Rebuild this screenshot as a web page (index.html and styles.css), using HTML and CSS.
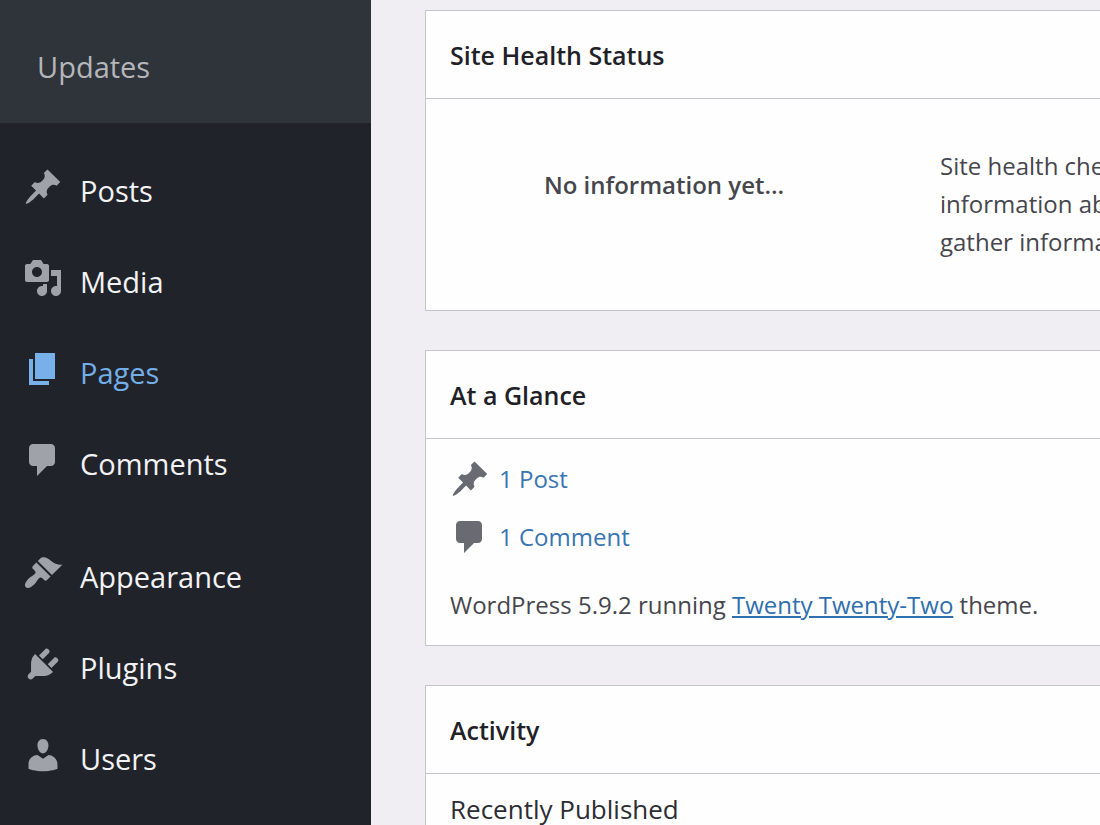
FILE: index.html
```html
<!DOCTYPE html>
<html lang="en">
<head>
<meta charset="utf-8">
<title>Dashboard</title>
<link rel="stylesheet" href="styles.css">
</head>
<body>
<div class="admin">
  <nav class="sidebar" aria-label="Main menu">
    <div class="submenu"><a href="#updates">Updates</a></div>
    <ul class="menu">
      <li><a class="menu-item" href="#posts">
        <svg class="icon" viewBox="0 0 20 20" aria-hidden="true"><path d="M10.44 3.02l1.82-1.82 6.36 6.35-1.83 1.82c-1.05-.68-2.48-.57-3.41.36l-.75.75c-.92.93-1.04 2.35-.35 3.41l-1.83 1.82-2.41-2.41-2.8 2.79c-.42.42-3.38 2.71-3.8 2.29s1.86-3.39 2.28-3.81l2.79-2.79L4.1 9.36l1.83-1.82c1.05.69 2.48.57 3.4-.36l.75-.75c.93-.92 1.05-2.35.36-3.41z"/></svg>
        <span>Posts</span></a></li>
      <li><a class="menu-item" href="#media">
        <svg class="icon" viewBox="0 0 20 20" aria-hidden="true"><path d="M13 11V4c0-.55-.45-1-1-1h-1.67L9 1H5L3.67 3H2c-.55 0-1 .45-1 1v7c0 .55.45 1 1 1h10c.55 0 1-.45 1-1zM7 4.5c1.38 0 2.5 1.12 2.5 2.5S8.38 9.5 7 9.5 4.5 8.38 4.5 7 5.62 4.5 7 4.5zM14 6h5v10.5c0 1.38-1.12 2.5-2.5 2.5S14 17.88 14 16.5s1.12-2.5 2.5-2.5c.17 0 .34.02.5.05V9h-3V6zm-4 8.05V13h2v3.5c0 1.38-1.12 2.5-2.5 2.5S7 17.88 7 16.5 8.12 14 9.5 14c.17 0 .34.02.5.05z"/></svg>
        <span>Media</span></a></li>
      <li><a class="menu-item is-active" href="#pages">
        <svg class="icon" viewBox="0 0 20 20" aria-hidden="true"><path d="M6 15V2h10v13H6zm-1 1h8v2H3V5h2v11z"/></svg>
        <span>Pages</span></a></li>
      <li><a class="menu-item" href="#comments">
        <svg class="icon" viewBox="0 0 20 20" aria-hidden="true"><path d="M5 2h9c1.1 0 2 .9 2 2v7c0 1.1-.9 2-2 2h-2l-5 5v-5H5c-1.1 0-2-.9-2-2V4c0-1.1.9-2 2-2z"/></svg>
        <span>Comments</span></a></li>
    </ul>
    <ul class="menu">
      <li><a class="menu-item" href="#appearance">
        <svg class="icon" viewBox="0 0 20 20" aria-hidden="true"><path d="M14.48 11.06L7.41 3.99l1.5-1.5c.5-.56 2.3-.47 3.51.32 1.21.8 1.43 1.28 2.91 2.1 1.18.64 2.45 1.26 4.45.85zm-.71.71L6.7 4.7 4.93 6.47c-.39.39-.39 1.02 0 1.41l1.06 1.06c.39.39.39 1.03 0 1.42-.6.6-1.43 1.11-2.21 1.69-.35.26-.7.53-1.01.84C1.43 14.23.4 16.08 1.4 17.07c.99 1 2.84-.03 4.18-1.36.31-.31.58-.66.85-1.02.57-.78 1.08-1.61 1.69-2.21.39-.39 1.02-.39 1.41 0l1.06 1.06c.39.39 1.02.39 1.41 0z"/></svg>
        <span>Appearance</span></a></li>
      <li><a class="menu-item" href="#plugins">
        <svg class="icon" viewBox="0 0 20 20" aria-hidden="true"><path d="M13.11 4.36L9.87 7.6 8 5.73l3.24-3.24c.35-.34 1.05-.2 1.56.32.52.51.66 1.21.31 1.55zm-8 1.77l.91-1.12 9.01 9.01-1.19.84c-.71.71-2.63 1.16-3.82 1.16H6.14L4.9 17.26c-.59.59-1.54.59-2.12 0-.59-.58-.59-1.53 0-2.12l1.24-1.24v-3.88c0-1.13.4-3.19 1.09-3.89zm7.26 3.97l3.24-3.24c.34-.35 1.04-.21 1.55.31.52.51.66 1.21.31 1.55l-3.24 3.25z"/></svg>
        <span>Plugins</span></a></li>
      <li><a class="menu-item" href="#users">
        <svg class="icon" viewBox="0 0 20 20" aria-hidden="true"><path d="M10 9.25c-2.27 0-2.73-3.44-2.73-3.44C7 4.02 7.82 2 9.97 2c2.16 0 2.98 2.02 2.71 3.81 0 0-.41 3.44-2.68 3.44zm0 2.57L12.72 10c2.39 0 4.52 2.33 4.52 4.53v2.49s-3.65 1.13-7.24 1.13c-3.65 0-7.24-1.13-7.24-1.13v-2.49c0-2.25 1.94-4.48 4.47-4.48z"/></svg>
        <span>Users</span></a></li>
    </ul>
  </nav>
  <main class="content">
    <section class="panel">
      <h2 class="panel-title">Site Health Status</h2>
      <div class="health">
        <p class="health-label">No information yet…</p>
        <p class="health-text">Site health checks<br>information about<br>gather information</p>
      </div>
    </section>
    <section class="panel">
      <h2 class="panel-title">At a Glance</h2>
      <div class="glance">
        <ul class="counts">
          <li><a class="count" href="#posts">
            <svg class="icon" viewBox="0 0 20 20" aria-hidden="true"><path d="M10.44 3.02l1.82-1.82 6.36 6.35-1.83 1.82c-1.05-.68-2.48-.57-3.41.36l-.75.75c-.92.93-1.04 2.35-.35 3.41l-1.83 1.82-2.41-2.41-2.8 2.79c-.42.42-3.38 2.71-3.8 2.29s1.86-3.39 2.28-3.81l2.79-2.79L4.1 9.36l1.83-1.82c1.05.69 2.48.57 3.4-.36l.75-.75c.93-.92 1.05-2.35.36-3.41z"/></svg>
            <span>1 Post</span></a></li>
          <li><a class="count" href="#comments">
            <svg class="icon" viewBox="0 0 20 20" aria-hidden="true"><path d="M5 2h9c1.1 0 2 .9 2 2v7c0 1.1-.9 2-2 2h-2l-5 5v-5H5c-1.1 0-2-.9-2-2V4c0-1.1.9-2 2-2z"/></svg>
            <span>1 Comment</span></a></li>
        </ul>
        <p class="version">WordPress 5.9.2 running <a href="#themes">Twenty Twenty-Two</a> theme.</p>
      </div>
    </section>
    <section class="panel">
      <h2 class="panel-title">Activity</h2>
      <h3 class="activity-title">Recently Published</h3>
    </section>
  </main>
</div>
</body>
</html>
```

FILE: styles.css
```css
* {
  box-sizing: border-box;
}

body,
h2,
h3,
p,
ul {
  margin: 0;
  padding: 0;
}

ul {
  list-style: none;
}

body {
  background: #f0eef3;
  color: #46464d;
  font: 24px/38px "Open Sans", "Noto Sans", sans-serif;
}

.admin {
  display: flex;
  height: 100vh;
  overflow: hidden;
}

.sidebar {
  flex: 0 0 371px;
  background: #20232a;
  font-size: 29px;
}

.submenu {
  padding: 48px 37px 37px;
  background: #2f333a;
}

.submenu a {
  color: #b4b6ba;
  text-decoration: none;
}

.menu {
  padding-top: 22px;
}

.menu-item {
  display: flex;
  align-items: center;
  gap: 17px;
  height: 91px;
  padding-left: 23px;
  color: #f2f2f4;
  text-decoration: none;
}

.icon {
  flex: none;
  width: 40px;
  height: 40px;
  fill: #a0a2aa;
}

.menu-item .icon {
  margin-bottom: 8px;
}

.menu-item.is-active {
  color: #74aee8;
}

.is-active .icon {
  fill: #78b0ea;
}

.content {
  display: flex;
  flex: 1;
  flex-direction: column;
  gap: 39px;
  min-width: 0;
  padding: 10px 0 0 54px;
}

.panel {
  flex: none;
  border: 1px solid #c6c5cb;
  border-right: 0;
  background: #fefefe;
}

.panel-title {
  padding: 25px 24px 24px;
  border-bottom: 1px solid #c6c5cb;
  color: #1f2127;
  font-size: 25px;
  font-weight: 600;
}

.health {
  display: flex;
  gap: 62px;
  padding: 48px 0 49px 24px;
  overflow: hidden;
  white-space: nowrap;
}

.health-label {
  flex: 0 0 428px;
  padding-top: 19px;
  font-weight: 600;
  text-align: center;
}

.glance {
  padding: 11px 24px 21px;
}

.count {
  display: flex;
  align-items: center;
  gap: 9px;
  height: 58px;
  color: #3875b1;
  text-decoration: none;
}

.count .icon {
  fill: #696a72;
}

.version {
  padding-top: 20px;
}

.version a {
  color: #2f6fae;
}

.activity-title {
  padding: 16px 24px;
  color: #2b2d33;
  font-size: 26px;
  font-weight: 400;
}
```
